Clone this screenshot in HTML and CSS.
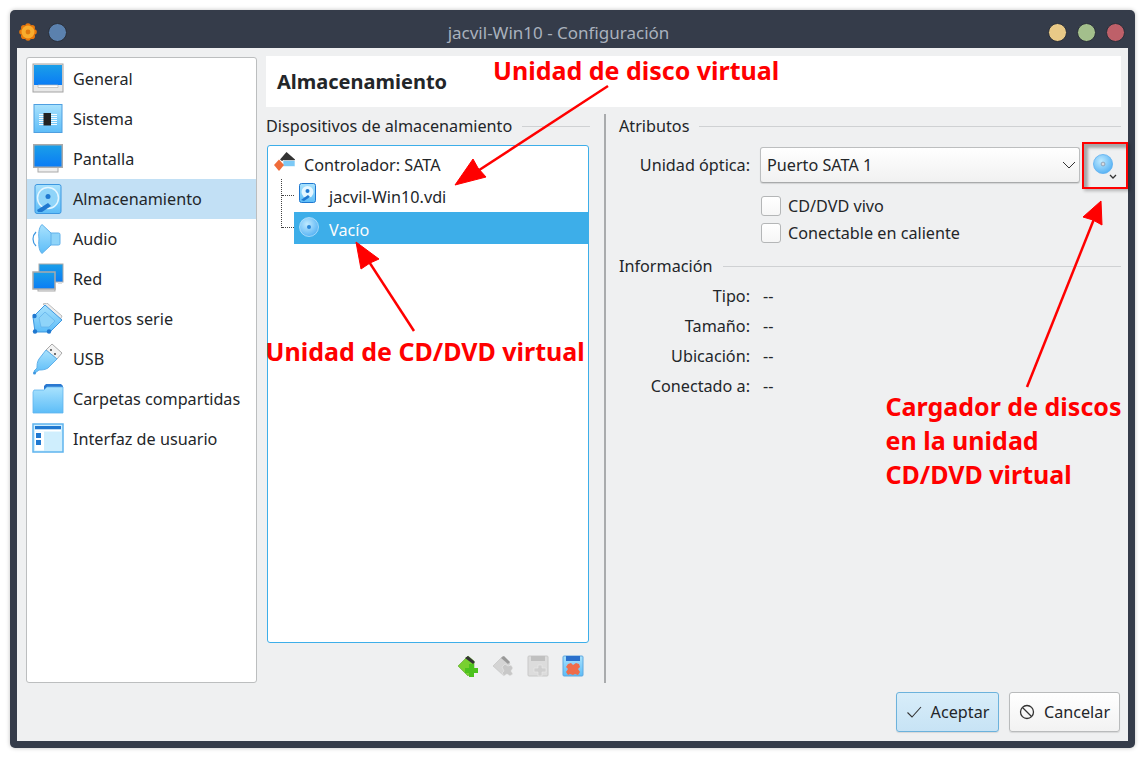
FILE: index.html
```html
<!DOCTYPE html>
<html lang="es">
<head>
<meta charset="utf-8">
<title>jacvil-Win10 - Configuración</title>
<link rel="stylesheet" href="styles.css">
</head>
<body>
<svg class="defs" width="0" height="0" aria-hidden="true">
  <defs>
    <linearGradient id="blue" x1="0" y1="0" x2="0" y2="1"><stop offset="0" stop-color="#1b9fe8"/><stop offset="1" stop-color="#0a7cf5"/></linearGradient>
    <linearGradient id="light" x1="0" y1="0" x2="0" y2="1"><stop offset="0" stop-color="#a9e2fd"/><stop offset="1" stop-color="#5dbdf8"/></linearGradient>
    <radialGradient id="disc" cx=".4" cy=".35" r=".8"><stop offset="0" stop-color="#bfeaff"/><stop offset="1" stop-color="#43a8f2"/></radialGradient>
  </defs>
</svg>
<div class="window">
  <header class="titlebar">
    <div class="tb-left">
      <svg class="tb-logo" viewBox="0 0 18 18"><g fill="#e8780c"><circle cx="9" cy="3" r="2.800"/><circle cx="9" cy="15" r="2.800"/><circle cx="3" cy="9" r="2.800"/><circle cx="15" cy="9" r="2.800"/><circle cx="4.800" cy="4.800" r="2.800"/><circle cx="13.200" cy="4.800" r="2.800"/><circle cx="4.800" cy="13.200" r="2.800"/><circle cx="13.200" cy="13.200" r="2.800"/></g><circle cx="9" cy="9" r="6.500" fill="#f8ad2e"/><circle cx="9" cy="9" r="2.400" fill="#e07a10"/></svg>
      <span class="tb-dot dot-blue"></span>
    </div>
    <div class="tb-title">jacvil-Win10 - Configuración</div>
    <div class="tb-right">
      <span class="tb-dot dot-yellow"></span>
      <span class="tb-dot dot-green"></span>
      <span class="tb-dot dot-red"></span>
    </div>
  </header>

  <div class="client">
    <div class="panels">
      <nav class="sidebar">
        <div class="nav-item">
          <svg class="nav-icon" viewBox="0 0 32 32"><rect x="1" y="1" width="30" height="28" fill="#e8e8e8" stroke="#a4a4a4"/><rect x="2" y="2" width="28" height="20" fill="url(#blue)"/><path d="M6 22h20v2.500H6z" fill="#fff" stroke="#b4b4b4" stroke-width=".7"/></svg>
          <span>General</span>
        </div>
        <div class="nav-item">
          <svg class="nav-icon" viewBox="0 0 32 32"><rect x="2" y="1.500" width="28" height="28" fill="url(#light)" stroke="#4f9fe0"/><path d="M7 11.500h18M7 13.500h18M7 15.500h18M7 17.500h18M7 19.500h18M7 21.500h18" stroke="#fff" stroke-width=".9"/><rect x="11.500" y="10" width="7.500" height="12.500" fill="#222"/></svg>
          <span>Sistema</span>
        </div>
        <div class="nav-item">
          <svg class="nav-icon" viewBox="0 0 32 32"><rect x="6" y="24" width="20" height="5" fill="#eee" stroke="#aaa"/><rect x="1" y="1" width="30" height="24" fill="#aaa"/><rect x="2.500" y="2.500" width="27" height="21" fill="url(#blue)"/></svg>
          <span>Pantalla</span>
        </div>
        <div class="nav-item active">
          <svg class="nav-icon" viewBox="0 0 32 32"><rect x="3" y="1.500" width="26" height="29" rx="2" fill="url(#light)" stroke="#3d97e0"/><circle cx="16" cy="15" r="10.500" fill="#8fd4f9" stroke="#e4f6ff" stroke-width="1.500"/><circle cx="16" cy="13.500" r="2.500" fill="#1f78d0"/><path d="M5 27l11-7 3 3-9 6H6z" fill="#1f78d0"/></svg>
          <span>Almacenamiento</span>
        </div>
        <div class="nav-item">
          <svg class="nav-icon" viewBox="0 0 32 32"><path d="M4 9c-4 4-4 10 0 14" fill="none" stroke="#3d97e0" stroke-width="1.200"/><rect x="17" y="10" width="11" height="12" rx="1.500" fill="#8fd4f9" stroke="#60b0ea"/><path d="M7 16C6 8 8 3 10 1.500L19 10V22L10 30.500C8 29 6 24 7 16z" fill="url(#light)" stroke="#60b0ea"/></svg>
          <span>Audio</span>
        </div>
        <div class="nav-item">
          <svg class="nav-icon" viewBox="0 0 32 32"><rect x="7" y="1" width="24" height="18" fill="url(#blue)" stroke="#aaa"/><rect x="26" y="19" width="4" height="2" fill="#ddd"/><rect x="6" y="24" width="17" height="4" fill="#eee" stroke="#aaa"/><rect x="1" y="9" width="22" height="17" fill="url(#blue)" stroke="#aaa" stroke-width="1.500"/></svg>
          <span>Red</span>
        </div>
        <div class="nav-item">
          <svg class="nav-icon" viewBox="0 0 32 32"><path d="M11 1l4-1 15 13-2 4z" fill="#eee" stroke="#bbb"/><path d="M1 14L13 2l17 15-12 12H3z" fill="url(#light)" stroke="#3d97e0"/><path d="M7 15l6-6 10 9-6 6H9z" fill="#8fd4f9" stroke="#60b0ea" stroke-width=".7"/><circle cx="2.500" cy="13" r="2.200" fill="#1f78d0"/><circle cx="3" cy="28.500" r="2.200" fill="#1f78d0"/><circle cx="17" cy="28.500" r="2.200" fill="#1f78d0"/></svg>
          <span>Puertos serie</span>
        </div>
        <div class="nav-item">
          <svg class="nav-icon" viewBox="0 0 32 32"><path d="M20 1l10 9-5 6-11-9z" fill="#f2f2f2" stroke="#aaa"/><circle cx="19" cy="7" r=".9" fill="#333"/><circle cx="23" cy="11" r=".9" fill="#333"/><path d="M14 7l11 9-9 9c-3 2-7 2-9 2l-4 3-1-2 3-3c0-3 0-6 2-9z" fill="url(#light)" stroke="#60b0ea"/><circle cx="2.500" cy="30" r="1.500" fill="#3d97e0"/></svg>
          <span>USB</span>
        </div>
        <div class="nav-item">
          <svg class="nav-icon" viewBox="0 0 32 32"><path d="M12 3l2-2h15l2 2v6H12z" fill="#2a78d0"/><path d="M1 9l1-2h10l3-3h16v26H1z" fill="url(#light)" stroke="#5fb4ee" stroke-width=".8"/></svg>
          <span>Carpetas compartidas</span>
        </div>
        <div class="nav-item">
          <svg class="nav-icon" viewBox="0 0 32 32"><rect x="1" y="1" width="30" height="28" fill="#cfeefd" stroke="#5fb4ee" stroke-width="1.500"/><rect x="3" y="3" width="26" height="3.500" fill="#1f78d0"/><rect x="3" y="6.500" width="26" height="2" fill="#fff"/><rect x="3" y="8.500" width="9" height="19" fill="#fff"/><rect x="4" y="10" width="5" height="5" fill="#1f78d0"/><rect x="4" y="17" width="5" height="5" fill="#1f78d0"/></svg>
          <span>Interfaz de usuario</span>
        </div>
      </nav>

      <main class="page">
        <h1 class="page-title">Almacenamiento</h1>
        <div class="columns">
          <section class="devices">
            <div class="group-head"><span>Dispositivos de almacenamiento</span><i></i></div>
            <div class="tree">
              <div class="tree-row root">
                <svg class="tree-icon" viewBox="0 0 22 20"><path d="M6 7.500L12.500 0 21 7.500V9H8z" fill="#333"/><rect x="9" y="8.500" width="12" height="6" fill="#7cc9f6" stroke="#fff" stroke-width=".6"/><path d="M0 13l5-5.500L10 13l-5 6z" fill="#ef6c3a"/></svg>
                <span>Controlador: SATA</span>
              </div>
              <div class="tree-children">
                <div class="tree-row child">
                  <svg class="tree-icon-sm" viewBox="0 0 18 20"><rect x=".5" y=".5" width="16" height="19" rx="2" fill="url(#light)" stroke="#1f78d0"/><circle cx="8.500" cy="9" r="6" fill="#e4f6ff"/><circle cx="8.500" cy="8" r="2" fill="#1f78d0"/><path d="M2 17l7-5 2 2-6 4z" fill="#1f78d0"/></svg>
                  <span>jacvil-Win10.vdi</span>
                </div>
                <div class="tree-row child selected">
                  <svg class="tree-disc" viewBox="0 0 20 20"><circle cx="10" cy="10" r="9.500" fill="url(#disc)" stroke="#d6f0ff" stroke-width=".6"/><circle cx="10" cy="10" r="2" fill="#2a86d8"/></svg>
                  <span>Vacío</span>
                </div>
              </div>
            </div>
            <div class="tree-tools">
              <svg class="tool-icon" viewBox="0 0 22 22"><path d="M1 11l10-10 6 5v8l-6 7z" fill="#78d030" stroke="#4a9a18" stroke-width=".5"/><path d="M8 3l3-2 7 6-2 2z" fill="#333"/><path d="M12 9h5v4h4v5h-4v4h-5v-4H8v-5h4z" fill="#4cc21e"/></svg>
              <svg class="tool-icon" viewBox="0 0 22 22"><path d="M1 11l10-10 7 7-6 13z" fill="#d4d4d4" stroke="#bbb" stroke-width=".5"/><path d="M9 3l3-2 6 6-2 2z" fill="#999"/><path d="M10 12l3-3 3 2 3-1 2 3-2 3 2 3-3 2-3-2-3 2-2-3 2-2z" fill="#c8c8c8" stroke="#eee" stroke-width=".5"/></svg>
              <svg class="tool-icon" viewBox="0 0 22 22"><rect x="1" y="1" width="20" height="20" rx="1" fill="#dcdcdc" stroke="#c8c8c8"/><rect x="4" y="1" width="14" height="5" fill="#c0c0c0"/><path d="M11 10h4v3h4v4h-4v4h-4v-4H7v-4h4z" fill="#cfcfcf" stroke="#eee" stroke-width=".5"/></svg>
              <svg class="tool-icon" viewBox="0 0 22 22"><rect x="1" y="1" width="20" height="20" rx="1" fill="url(#light)" stroke="#5fa8e0"/><rect x="4" y="1" width="14" height="5" fill="#2a70cc"/><path d="M6 9l3-1 2 2 3-2 3 1 1 3-2 2 2 3-2 3-3-1-2 1-3-1-2 1-2-3 2-3-2-2z" fill="#ef6c4a"/></svg>
            </div>
          </section>

          <div class="divider"></div>

          <section class="attrs">
            <div class="group-head"><span>Atributos</span><i></i></div>
            <div class="drive-row">
              <label class="field-label">Unidad óptica:</label>
              <div class="combo">
                <span>Puerto SATA 1</span>
                <svg class="chev" viewBox="0 0 14 8"><path d="M1 1l6 6 6-6" fill="none" stroke="#333" stroke-width="1"/></svg>
              </div>
              <div class="disc-btn">
                <svg class="disc-icon" viewBox="0 0 22 22"><circle cx="10.500" cy="10.500" r="10" fill="url(#disc)" stroke="#5aaef0" stroke-width=".8"/><circle cx="10.500" cy="10.500" r="2" fill="#d7dce2" stroke="#7a8aa0" stroke-width=".7"/></svg>
                <svg class="disc-chev" viewBox="0 0 8 5"><path d="M1 1l3 3 3-3" fill="none" stroke="#333" stroke-width="1.300"/></svg>
              </div>
            </div>
            <div class="checks">
              <div class="check"><span class="box"></span><span>CD/DVD vivo</span></div>
              <div class="check"><span class="box"></span><span>Conectable en caliente</span></div>
            </div>
            <div class="group-head info-head"><span>Información</span><i></i></div>
            <dl class="info">
              <dt>Tipo:</dt><dd>--</dd>
              <dt>Tamaño:</dt><dd>--</dd>
              <dt>Ubicación:</dt><dd>--</dd>
              <dt>Conectado a:</dt><dd>--</dd>
            </dl>
          </section>
        </div>
      </main>
    </div>

    <footer class="actions">
      <button class="btn primary">
        <svg class="btn-icon" viewBox="0 0 16 16"><path d="M1.500 8.500l4.500 4.500 9-10" fill="none" stroke="#333" stroke-width="1.100"/></svg>
        <span>Aceptar</span>
      </button>
      <button class="btn">
        <svg class="btn-icon" viewBox="0 0 16 16"><circle cx="8" cy="8" r="6.500" fill="none" stroke="#333" stroke-width="1.300"/><path d="M3.500 3.500l9 9" stroke="#333" stroke-width="1.300"/></svg>
        <span>Cancelar</span>
      </button>
    </footer>
  </div>
</div>

<svg class="arrows" viewBox="0 0 1145 758" aria-hidden="true">
  <g stroke="#ff0000" stroke-width="2.500" fill="#ff0000">
    <path d="M608 86L470 176"/>
    <path d="M455 185l18-26 5 9 8 9z" stroke-width="1"/>
    <path d="M414 331L362 251"/>
    <path d="M356 242l23 17-9 4-9 6z" stroke-width="1"/>
    <path d="M1027 387L1096 214"/>
    <path d="M1101 201l1 24-9-5-10-3z" stroke-width="1"/>
  </g>
</svg>
<div class="disc-mark"></div>
<div class="note note-disk">Unidad de disco virtual</div>
<div class="note note-cd">Unidad de CD/DVD virtual</div>
<div class="note note-load">Cargador de discos<br>en la unidad<br>CD/DVD virtual</div>
</body>
</html>
```
FILE: styles.css
```css
* { box-sizing: border-box; }
html, body { margin: 0; height: 100%; }
body {
  position: relative;
  width: 1145px;
  height: 758px;
  padding: 10px;
  background: #fff;
  font-family: "Noto Sans", sans-serif;
  font-size: 16.200px;
  color: #232629;
  overflow: hidden;
}
.defs { position: absolute; }

.window {
  display: flex;
  flex-direction: column;
  width: 1125px;
  height: 738px;
  background: #353c4a;
  border-radius: 5px;
  box-shadow: 0 0 4px rgba(0, 0, 0, .25);
  padding: 0 7px 7px;
}
.titlebar {
  display: flex;
  align-items: center;
  justify-content: space-between;
  height: 38px;
  padding-top: 6px;
  flex: none;
}
.tb-left, .tb-right { display: flex; align-items: center; }
.tb-left { margin-left: 2px; gap: 11px; }
.tb-right { gap: 10px; margin-right: 3px; }
.tb-logo { width: 18px; height: 18px; }
.tb-title {
  flex: 1;
  text-align: center;
  color: #a9b1bd;
  font-size: 17px;
  margin-left: 2px;
}
.tb-dot {
  width: 19px;
  height: 19px;
  border-radius: 50%;
  border: 1px solid #2a2f3a;
}
.dot-blue { background: #5b81ae; }
.dot-yellow { background: #e8c987; }
.dot-green { background: #a3bf8c; }
.dot-red { background: #be6069; }

.client {
  flex: 1;
  display: flex;
  flex-direction: column;
  background: #eff0f1;
  padding: 8px 7px 9px 9px;
  min-height: 0;
}
.panels { flex: 1; display: flex; gap: 9px; min-height: 0; }

.sidebar {
  width: 231px;
  flex: none;
  height: 626px;
  margin-top: 1px;
  background: #fff;
  border: 1px solid #bcbebf;
  border-radius: 3px;
  padding-top: 1px;
}
.nav-item {
  display: flex;
  align-items: center;
  height: 40px;
  gap: 9px;
  padding-left: 5px;
}
.nav-item.active { background: #c2e0f5; }
.nav-icon { width: 32px; height: 32px; flex: none; }

.page { flex: 1; display: flex; flex-direction: column; min-width: 0; }
.page-title {
  margin: 0;
  height: 51px;
  flex: none;
  background: #fff;
  padding-left: 11px;
  line-height: 52px;
  font-size: 20px;
  font-weight: 700;
  color: #232629;
}
.columns { flex: 1; display: flex; min-height: 0; }
.group-head {
  display: flex;
  align-items: center;
  gap: 10px;
  height: 20px;
}
.group-head i { flex: 1; height: 1px; background: #cfd1d3; }

.devices { width: 324px; flex: none; padding-top: 9px; display: flex; flex-direction: column; }
.tree {
  margin: 9px 1px 0;
  height: 498px;
  background: #fff;
  border: 1px solid #3daee9;
  border-radius: 3px;
  padding: 3px 0 0;
}
.tree-row { display: flex; align-items: center; height: 32px; }
.root { padding-left: 6px; gap: 8px; }
.tree-icon { width: 22px; height: 20px; flex: none; margin-top: -6px; }
.tree-children {
  margin-left: 13px;
  padding-left: 13px;
  margin-top: -1px;
  position: relative;
}
.tree-children::before {
  content: "";
  position: absolute;
  left: 0;
  top: -1px;
  height: 49px;
  border-left: 1px dotted #444;
}
.child { gap: 12px; padding-left: 5px; position: relative; }
.child > span { padding-top: 2px; }
.child::before {
  content: "";
  position: absolute;
  left: -12px;
  top: 15px;
  width: 12px;
  border-top: 1px dotted #444;
}
.selected { gap: 10px; background: #3daee9; color: #fcfcfc; }
.selected > span { padding-top: 4px; }
.tree-icon-sm { width: 18px; height: 20px; flex: none; margin-top: -6px; }
.tree-disc { width: 20px; height: 20px; flex: none; margin-top: -3px; }
.tree-tools { display: flex; gap: 13px; justify-content: flex-end; padding: 12px 6px 0 0; }
.tool-icon { width: 22px; height: 22px; }

.divider { width: 2px; margin: 7px 13px 0 14px; height: 569px; background: #a9abad; flex: none; }

.attrs { flex: 1; min-width: 0; padding-top: 9px; }
.drive-row { display: flex; align-items: center; margin-top: 6px; height: 46px; }
.field-label { width: 131px; text-align: right; flex: none; }
.combo {
  margin-left: 10px;
  width: 320px;
  height: 36px;
  flex: none;
  display: flex;
  align-items: center;
  justify-content: space-between;
  padding: 0 3px 0 6px;
  background: linear-gradient(#ffffff, #f1f1f1);
  border: 1px solid #bcbebf;
  border-bottom-color: #a8aaab;
  border-radius: 3px;
  box-shadow: 0 1px 1px rgba(0, 0, 0, .12);
}
.chev { width: 14px; height: 8px; }
.disc-btn {
  position: relative;
  width: 46px;
  height: 46px;
  flex: none;
  margin-left: 2px;
}
.disc-icon { position: absolute; left: 11px; top: 12px; width: 21px; height: 21px; }
.disc-chev { position: absolute; left: 27px; top: 32px; width: 8px; height: 5px; }
.disc-mark {
  position: absolute;
  left: 1082px;
  top: 142px;
  width: 46px;
  height: 47px;
  border: 2.500px solid #f00;
  box-shadow: inset 4px 4px 3px rgba(0, 0, 0, .3), 2px 2px 3px rgba(0, 0, 0, .25);
}
.checks { margin: 8px 0 0 141px; display: flex; flex-direction: column; gap: 7px; }
.check { display: flex; align-items: center; gap: 7px; height: 20px; }
.box {
  width: 20px;
  height: 20px;
  margin-left: 1px;
  background: linear-gradient(#fff, #f6f6f6);
  border: 1px solid #b4b6b7;
  border-radius: 3px;
}
.info-head { margin-top: 13px; }
.info {
  display: grid;
  grid-template-columns: 131px 1fr;
  grid-auto-rows: 30px;
  column-gap: 13px;
  align-items: center;
  margin: 5px 0 0;
}
.info dt { text-align: right; }
.info dd { margin: 0; }

.actions { display: flex; justify-content: flex-end; gap: 10px; flex: none; height: 40px; padding-right: 1px; }
.btn {
  display: flex;
  align-items: center;
  justify-content: center;
  gap: 9px;
  width: 111px;
  height: 40px;
  padding: 0;
  font: inherit;
  color: inherit;
  background: linear-gradient(#ffffff, #f2f2f2);
  border: 1px solid #b9bbbc;
  border-radius: 3px;
  box-shadow: 0 1px 1px rgba(0, 0, 0, .1);
}
.btn.primary {
  width: 103px;
  background: linear-gradient(#d8edf9, #c7e3f5);
  border-color: #6cb2dc;
}
.btn-icon { width: 16px; height: 16px; }

.arrows { position: absolute; left: 0; top: 0; width: 1145px; height: 758px; pointer-events: none; }
.note {
  position: absolute;
  color: #f00;
  font-weight: 700;
  font-size: 25px;
  line-height: 34px;
  white-space: nowrap;
}
.note-disk { left: 493px; top: 53px; }
.note-cd { left: 265.500px; top: 334px; }
.note-load { left: 885.500px; top: 389px; }
```
